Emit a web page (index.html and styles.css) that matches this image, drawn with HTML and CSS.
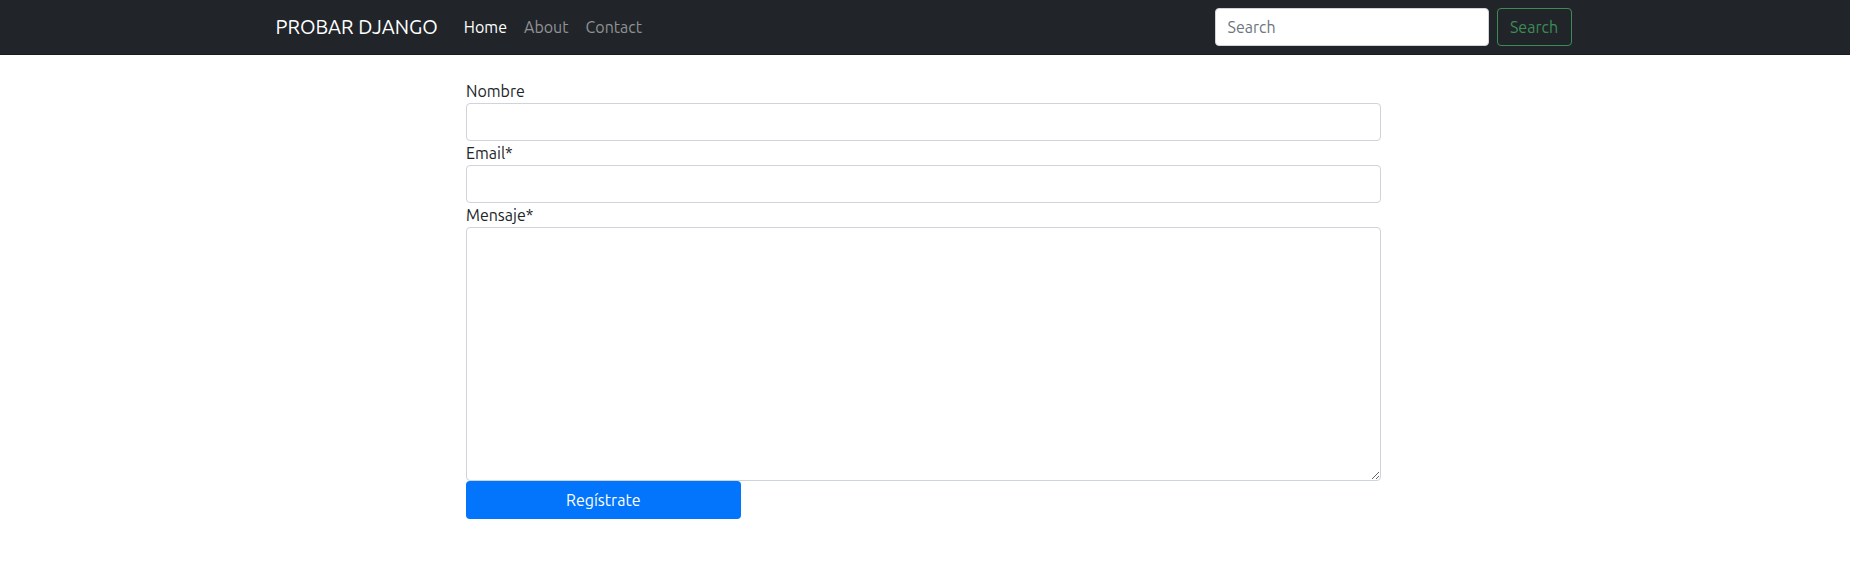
FILE: index.html
```html
<!DOCTYPE html>
<html lang="es">
<head>
<meta charset="utf-8">
<meta name="viewport" content="width=device-width, initial-scale=1">
<title>Probar Django</title>
<link rel="stylesheet" href="styles.css">
</head>
<body>
<header class="navbar">
  <div class="container">
    <a class="brand" href="#">PROBAR DJANGO</a>
    <nav class="nav">
      <a class="nav-link active" href="#">Home</a>
      <a class="nav-link" href="#">About</a>
      <a class="nav-link" href="#">Contact</a>
    </nav>
    <form class="search">
      <input class="control" type="search" placeholder="Search" aria-label="Search">
      <button class="btn btn-outline" type="submit">Search</button>
    </form>
  </div>
</header>
<main>
  <form class="contact">
    <label for="nombre">Nombre</label>
    <input class="control" id="nombre" type="text">
    <label for="email">Email*</label>
    <input class="control" id="email" type="email">
    <label for="mensaje">Mensaje*</label>
    <textarea class="control" id="mensaje" rows="10"></textarea>
    <button class="btn btn-primary" type="submit">Regístrate</button>
  </form>
</main>
</body>
</html>
```
FILE: styles.css
```css
*, *::before, *::after {
  box-sizing: border-box;
}

body {
  margin: 0;
  background: #fff;
  color: #212529;
  font: 400 16px/24px Ubuntu, "Noto Sans", sans-serif;
}

.navbar {
  padding: 8px 3px 8px 0;
  border-bottom: 1px solid #1a1d20;
  background: #212529;
}

.container {
  display: flex;
  align-items: center;
  max-width: 1320px;
  margin: 0 auto;
  padding: 0 12px;
}

.brand {
  margin-right: 18px;
  color: #fff;
  font-size: 20px;
  line-height: 30px;
  text-decoration: none;
  white-space: nowrap;
}

.nav {
  display: flex;
  flex: 1;
  gap: 1px;
}

.nav-link {
  padding: 0 8px;
  color: #909294;
  text-decoration: none;
}

.nav-link.active {
  color: #fff;
}

.search {
  display: flex;
  gap: 8px;
}

.search .control {
  width: 274px;
}

.control {
  display: block;
  width: 100%;
  margin: 0;
  padding: 6px 12px;
  border: 1px solid #ced4da;
  border-radius: 4px;
  background: #fff;
  color: #212529;
  font: inherit;
  appearance: none;
}

.control::placeholder {
  color: #6c757d;
  opacity: 1;
}

textarea.control {
  resize: vertical;
}

.btn {
  padding: 6px 12px;
  border: 1px solid transparent;
  border-radius: 4px;
  font: inherit;
  text-align: center;
  cursor: pointer;
}

.btn-outline {
  min-width: 75px;
  border-color: #3c8c57;
  background: transparent;
  color: #3c8c57;
}

.btn-primary {
  width: 30%;
  background: #0275fc;
  color: #fff;
}

main {
  padding: 24px 3px 24px 0;
}

.contact {
  max-width: 915px;
  margin: 0 auto;
}

.contact label {
  display: block;
}

.contact .btn {
  display: block;
}
```
